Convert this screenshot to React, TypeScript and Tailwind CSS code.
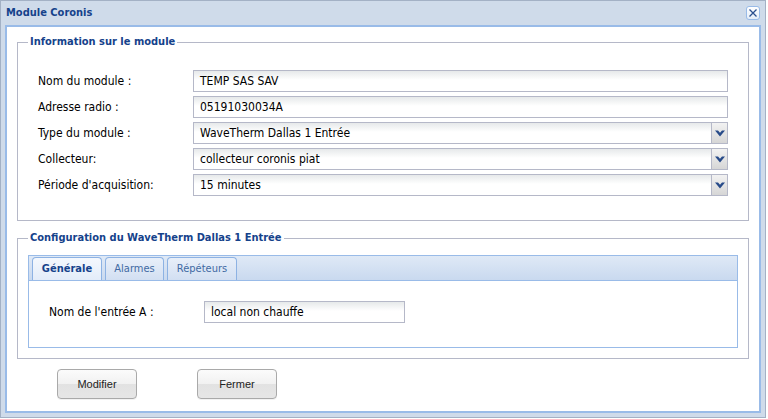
import React from "react";

const FONT = "font-['DejaVu_Sans_Condensed','Liberation_Sans',sans-serif]";

function Chevron() {
  return (
    <svg width="10" height="7" viewBox="0 0 10 7">
      <polygon points="0,0.5 3,0.5 5,2.8 7,0.5 10,0.5 5,6.5" fill="#284b89" />
    </svg>
  );
}

function TextField({ value, width }: { value: string; width?: string }) {
  return (
    <div
      className={`h-[22px] ${width ?? "flex-1"} border border-[#b5b8c8] bg-[linear-gradient(180deg,#e6e9ea_0px,#ffffff_9px)] flex items-center pl-[6px] text-[12px] text-black`}
    >
      {value}
    </div>
  );
}

function ComboField({ value }: { value: string }) {
  return (
    <div className="h-[22px] flex-1 border border-[#b5b8c8] bg-[linear-gradient(180deg,#e6e9ea_0px,#ffffff_9px)] flex items-stretch text-[12px] text-black">
      <div className="flex-1 flex items-center pl-[6px]">{value}</div>
      <div className="w-[16px] border-l border-[#b5b8c8] bg-[linear-gradient(180deg,#f2f2f2,#d6d6d6)] flex items-center justify-center">
        <Chevron />
      </div>
    </div>
  );
}

function Row({ label, children }: { label: string; children: React.ReactNode }) {
  return (
    <div className="flex items-center h-[22px]">
      <div className="w-[155px] text-[12px] text-black">{label}</div>
      {children}
    </div>
  );
}

function Legend({ text }: { text: string }) {
  return (
    <legend className="px-[2px] text-[11px] leading-[14px] font-bold text-[#15428b]">{text}</legend>
  );
}

function Button({ label }: { label: string }) {
  return (
    <div className="w-[80px] h-[30px] rounded-[4px] border border-[#a9a9a9] bg-[linear-gradient(180deg,#fbfbfb_0%,#f1f1f1_50%,#e2e2e2_50%,#e6e6e6_100%)] flex items-center justify-center text-[11px] text-[#222] font-['Liberation_Sans',sans-serif] shadow-[0_1px_0_rgba(0,0,0,0.05)]">
      {label}
    </div>
  );
}

export default function App() {
  return (
    <div className={`w-[768px] h-[419px] bg-white ${FONT}`}>
      <div className="w-[766px] h-[418px] border border-[#a3b1c5] bg-[#cfdbea] flex flex-col px-[4px] pb-[4px]">
        {/* Header */}
        <div className="h-[24px] flex items-center justify-between pl-[1px] pr-[1px]">
          <span className="text-[11px] font-bold text-[#15428b]">Module Coronis</span>
          <div className="w-[14px] h-[14px] rounded-[3px] border border-[#99bbe8] bg-[linear-gradient(180deg,#ffffff,#e4edf8)] flex items-center justify-center">
            <svg width="10" height="10" viewBox="0 0 10 10">
              <path d="M1.5 1.5 L8.5 8.5 M8.5 1.5 L1.5 8.5" stroke="#2a4f8e" strokeWidth="1.3" fill="none" />
            </svg>
          </div>
        </div>

        {/* Body */}
        <div className="flex-1 border-2 border-[#99bbe8] bg-white flex flex-col px-[10px]">
          <fieldset className="mt-[8px] border border-[#b5b8c8] px-[10px]">
            <Legend text="Information sur le module" />
            <div className="px-[10px] pt-[21px] pb-[24px] flex flex-col gap-[4px]">
              <Row label="Nom du module :">
                <TextField value="TEMP SAS SAV" />
              </Row>
              <Row label="Adresse radio :">
                <TextField value="05191030034A" />
              </Row>
              <Row label="Type du module :">
                <ComboField value="WaveTherm Dallas 1 Entrée" />
              </Row>
              <Row label="Collecteur:">
                <ComboField value="collecteur coronis piat" />
              </Row>
              <Row label="Période d'acquisition:">
                <ComboField value="15 minutes" />
              </Row>
            </div>
          </fieldset>

          <fieldset className="mt-[10px] border border-[#b5b8c8] px-[10px]">
            <Legend text="Configuration du WaveTherm Dallas 1 Entrée" />
            <div className="pt-[10px] pb-[10px]">
              <div className="border border-[#99bbe8]">
                {/* tab strip */}
                <div className="h-[25px] bg-[linear-gradient(180deg,#dfe9f6,#c9d9ef)] border-b border-[#99bbe8] flex items-end pl-[3px] gap-[3px]">
                  <div className="w-[70px] h-[23px] rounded-t-[4px] border border-b-0 border-[#8db2e3] bg-[linear-gradient(180deg,#f4f8fd,#e3ecf9)] flex items-center justify-center text-[11px] font-bold text-[#15428b]">
                    Générale
                  </div>
                  <div className="w-[59px] h-[23px] rounded-t-[4px] border border-b-0 border-[#8db2e3] bg-[linear-gradient(180deg,#e8eff9,#d2dff2)] flex items-center justify-center text-[11px] text-[#416aa3]">
                    Alarmes
                  </div>
                  <div className="w-[70px] h-[23px] rounded-t-[4px] border border-b-0 border-[#8db2e3] bg-[linear-gradient(180deg,#e8eff9,#d2dff2)] flex items-center justify-center text-[11px] text-[#416aa3]">
                    Répéteurs
                  </div>
                </div>
                {/* tab body */}
                <div className="bg-white pl-[20px] pt-[20px] pb-[24px]">
                  <div className="flex items-center h-[22px]">
                    <div className="w-[155px] text-[12px] text-black">Nom de l'entrée A :</div>
                    <TextField value="local non chauffe" width="w-[201px]" />
                  </div>
                </div>
              </div>
            </div>
          </fieldset>

          <div className="mt-[10px] pl-[40px] flex gap-[60px]">
            <Button label="Modifier" />
            <Button label="Fermer" />
          </div>
        </div>
      </div>
    </div>
  );
}
